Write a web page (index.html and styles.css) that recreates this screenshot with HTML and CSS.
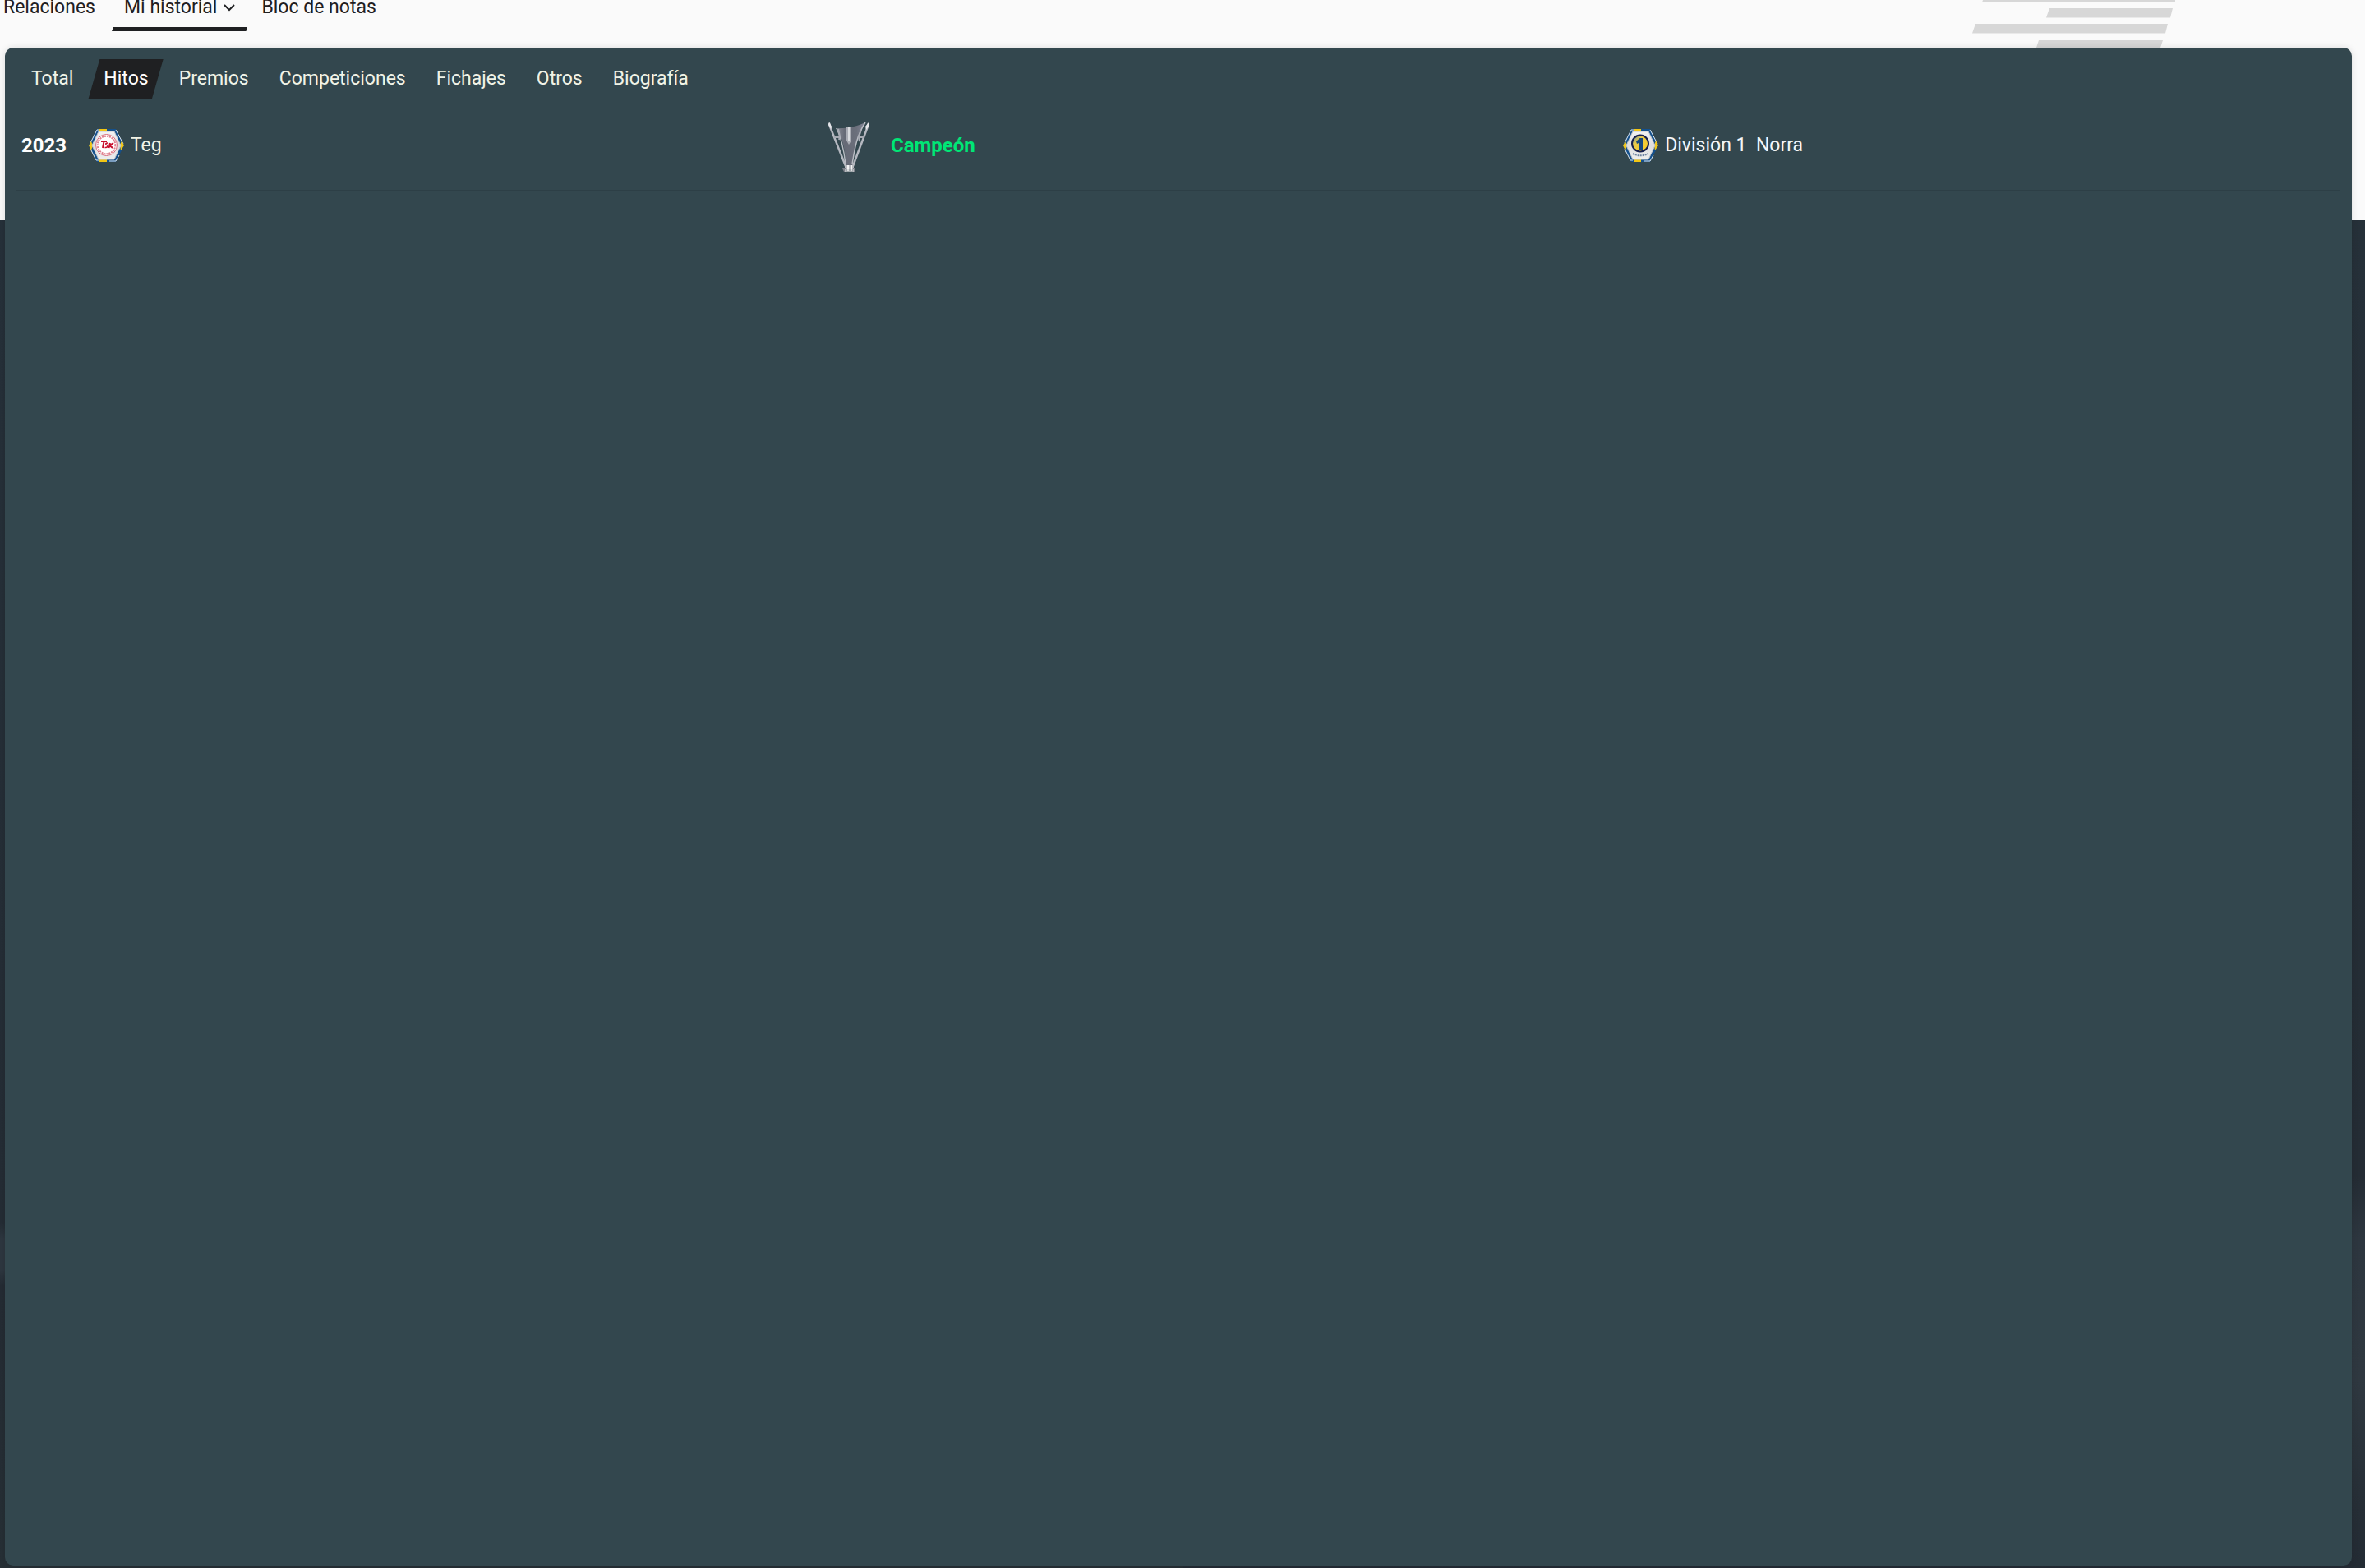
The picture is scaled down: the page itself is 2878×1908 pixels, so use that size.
FILE: index.html
```html
<!DOCTYPE html>
<html lang="es">
<head>
<meta charset="utf-8">
<title>Mi historial - Hitos</title>
<link rel="stylesheet" href="styles.css">
</head>
<body>
<svg class="defs" width="0" height="0" aria-hidden="true">
  <defs>
    <linearGradient id="silver" x1="0" y1="0" x2="0" y2="1">
      <stop offset="0" stop-color="#f4f4f4"/><stop offset=".5" stop-color="#dcdcde"/><stop offset="1" stop-color="#efefef"/>
    </linearGradient>
    <linearGradient id="ball" x1="0" y1="0" x2="1" y2="1">
      <stop offset="0" stop-color="#4f87b0"/><stop offset=".35" stop-color="#e9c94a"/><stop offset="1" stop-color="#ffd21a"/>
    </linearGradient>
    <linearGradient id="cup" x1="0" y1="0" x2="1" y2="0">
      <stop offset="0" stop-color="#8d919b"/><stop offset=".3" stop-color="#666a76"/><stop offset=".7" stop-color="#6b6f7b"/><stop offset="1" stop-color="#85899a"/>
    </linearGradient>
    <symbol id="hexagon" viewBox="0 0 43 42">
      <path d="M0 21 10 1H33L43 21 33 41H10Z" fill="#14508c"/>
      <path d="M2 18 10 2H13M33 2 42 19M2 25 9 39H12M25 40H33L37 33" fill="none" stroke="#dfe8f0" stroke-width="1"/>
      <path d="M13 1H22V4H13ZM13 38H22V41H13ZM0 21 3 16 5 21 3 27ZM43 21 40 15 38 21 39 27Z" fill="#f2c614"/>
      <path d="M4 21 12 4H31L39 21 31 38H12Z" fill="url(#silver)" stroke="#c3c6cb" stroke-width="1"/>
    </symbol>
  </defs>
</svg>
<header class="header">
  <nav class="sections" aria-label="Secciones">
    <a class="section" href="#relaciones">Relaciones</a>
    <a class="section section-active" href="#historial" aria-current="page">Mi historial
      <svg class="chevron" viewBox="0 0 14 10" aria-hidden="true"><path d="M1 2 7 8 13 2" fill="none" stroke="currentColor" stroke-width="2"/></svg>
    </a>
    <a class="section" href="#notas">Bloc de notas</a>
  </nav>
  <svg class="stripes" viewBox="0 0 247 58" aria-hidden="true">
    <path d="M13 0H248L247 3H12ZM94 10H244L241 21.5H90ZM4 29H238L235 40.5H0ZM81 49H232L229 58H78Z" fill="#d7d7d7"/>
  </svg>
</header>
<main class="panel">
  <nav class="tabs" aria-label="Historial">
    <a class="tab" href="#total">Total</a>
    <a class="tab tab-active" href="#hitos" aria-current="page">Hitos</a>
    <a class="tab" href="#premios">Premios</a>
    <a class="tab" href="#competiciones">Competiciones</a>
    <a class="tab" href="#fichajes">Fichajes</a>
    <a class="tab" href="#otros">Otros</a>
    <a class="tab" href="#biografia">Biografía</a>
  </nav>
  <table class="milestones">
    <colgroup><col class="col-year"><col class="col-club"><col class="col-result"><col class="col-league"></colgroup>
    <tbody>
      <tr>
        <th scope="row" class="year">2023</th>
        <td>
          <div class="entry">
            <svg class="badge" viewBox="0 0 43 42" aria-hidden="true">
              <use href="#hexagon"/>
              <circle cx="21.5" cy="20.5" r="13" fill="#fff" stroke="#d9697a" stroke-width="1"/>
              <circle cx="21.5" cy="20.5" r="10.8" fill="none" stroke="#e0808e" stroke-width="2" stroke-dasharray="2 1"/>
              <circle cx="21.5" cy="20.5" r="9" fill="#fff"/>
              <path d="M15 16H22M18.5 16 17 24M26 18 24.5 24M30 18 25.5 21 29 24" fill="none" stroke="#c8102e" stroke-width="2"/>
              <path d="M24 18C20 17.5 20 20 22 20.5S23 24 19.5 23.5" fill="none" stroke="#c8102e" stroke-width="1.5"/>
              <path d="M19 26.5H25" stroke="#d9697a" stroke-width="1"/>
            </svg>
            <a class="club" href="#teg">Teg</a>
          </div>
        </td>
        <td>
          <div class="entry entry-trophy">
            <svg class="trophy" viewBox="0 -4 50 66" aria-hidden="true">
              <path d="M9 8C20 9 35 6 45 1 36 15 31 34 29 54H21C21 34 17 18 9 8Z" fill="url(#cup)"/>
              <path d="M22 6H28V23L25 28 22 23Z" fill="#a9acb4"/><path d="M24 6H26V24H24Z" fill="#d8dade"/>
              <path d="M10 8C16 20 19 35 21 52M45 1C34 18 32 34 29 52" fill="none" stroke="#b9bcc3" stroke-width="1.5"/>
              <path d="M1 2 2 6 21 54M49 2 48 6 30 54" fill="none" stroke="#b5b8c0" stroke-width="2.5"/>
              <path d="M1 0 0 4 3 9 4 6ZM49 1 50 5 46 10 45 6Z" fill="#e6e7ea"/>
              <path d="M7 19H13M37 19H43M12 9 14 18 13 22M40 10 37 19 38 24" fill="none" stroke="#a7aab3" stroke-width="2"/>
              <path d="M20 53H31V58H20Z" fill="#b9bbc0"/><path d="M23 53H25V60H23ZM27 53H29V60H27Z" fill="#f3f3f4"/>
              <path d="M17 57 21 56V61H19ZM33 57 30 56V61H32Z" fill="#7d8089"/><path d="M20 58H31V61H20Z" fill="#d0d1d4" opacity=".7"/>
            </svg>
            <strong class="result">Campeón</strong>
          </div>
        </td>
        <td>
          <div class="entry">
            <svg class="badge" viewBox="0 0 43 42" aria-hidden="true">
              <use href="#hexagon"/>
              <circle cx="21" cy="18.5" r="10" fill="url(#ball)" stroke="#161f4d" stroke-width="2"/>
              <path d="M16 16 20.5 12H24V26H20V17.5L17 19Z" fill="#17497f"/>
              <path d="M12 31C18 34 25 34 31 31" fill="none" stroke="#6e83a0" stroke-width="2" stroke-dasharray="2 1"/>
            </svg>
            <a class="league" href="#division">División 1  Norra</a>
          </div>
        </td>
      </tr>
    </tbody>
  </table>
</main>
</body>
</html>
```
FILE: styles.css
```css
* { box-sizing: border-box; }
body {
  margin: 0;
  min-height: 100vh;
  display: flex;
  flex-direction: column;
  font: 23px/28px Roboto, "Liberation Sans", sans-serif;
  color: #1f2022;
  background:
    linear-gradient(#fafafa, #fafafa) 0 0 / 100% 268px no-repeat,
    linear-gradient(#26313a 0, #242c34 75%, #2d363f 79%, #2f3840 88%, #262e36 96%, #232b34 100%) right / 50% 100% no-repeat,
    linear-gradient(#26313a 0, #242c34 78%, #2d363f 79%, #2d363f 81%, #242b33 82%, #262f35 100%);
}
a { color: inherit; text-decoration: none; }
.defs { position: absolute; }
.header {
  display: flex;
  justify-content: space-between;
  align-items: flex-start;
}
.sections { display: flex; gap: 2px; }
.section {
  display: flex;
  align-items: center;
  gap: 8px;
  padding: 0 15px 20px;
  line-height: 18px;
}
.section:first-child { padding: 0 18px 20px 4px; }
.section-active {
  background: linear-gradient(#1f2022, #1f2022) bottom / 100% 5px no-repeat;
  clip-path: polygon(0 0, 100% 0, 100% calc(100% - 5px), calc(100% - 2px) 100%, 0 100%, 2px calc(100% - 5px));
}
.chevron { width: 14px; height: 10px; }
.stripes { width: 247px; height: 58px; margin-right: 231px; }
.panel {
  flex: 1;
  margin: 0 16px 3px 6px;
  padding: 14px 14px 0;
  border-radius: 10px;
  background: #33474e;
  box-shadow: 0 0 8px rgba(0, 0, 0, .12);
  color: #f1f3e6;
}
.tabs { display: flex; margin-left: -1px; }
.tab { padding: 10px 18px 11px 19px; }
.tab-active {
  background: #1f2022;
  color: #fff;
  clip-path: polygon(14px 0, 100% 0, calc(100% - 14px) 100%, 0 100%);
}
.milestones {
  width: 100%;
  table-layout: fixed;
  border-collapse: separate;
  border-spacing: 0;
}
.col-year { width: 82px; }
.col-club { width: 900px; }
.col-result { width: 34.2%; }
.milestones th, .milestones td {
  height: 112px;
  padding: 2px 6px 0;
  border-bottom: 2px solid #2d3f46;
  text-align: left;
  vertical-align: middle;
}
.milestones .year { color: #fff; font-size: 24px; font-weight: 700; }
.entry { display: flex; align-items: center; gap: 8px; }
.entry-trophy { gap: 26px; }
.badge { width: 43px; height: 42px; }
.trophy { width: 50px; height: 66px; }
.result { color: #00e676; font-size: 24px; }
.league { color: #f4f6f8; white-space: pre; }
```
